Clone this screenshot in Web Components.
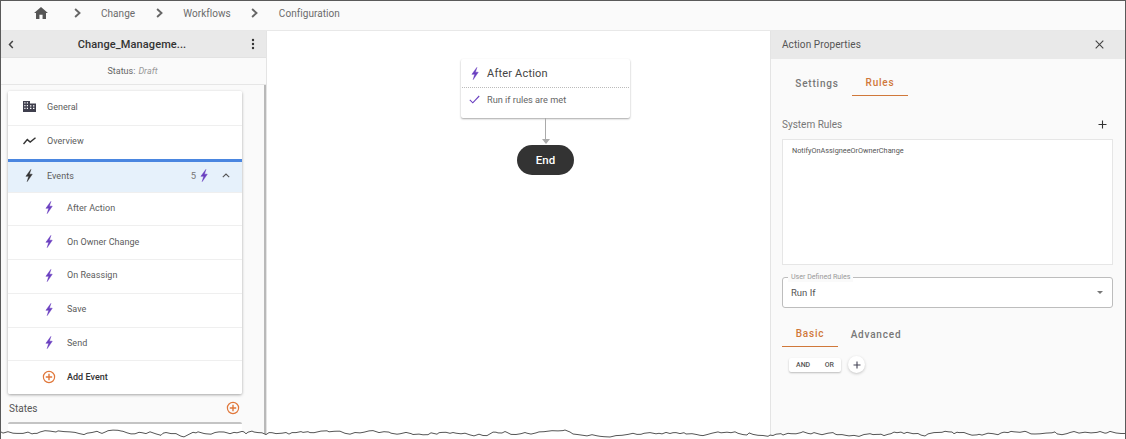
<!DOCTYPE html>
<html>
<head>
<meta charset="utf-8">
<title>Workflow configuration</title>
<style>
	html, body { margin: 0; height: 100%; background: #fff; overflow: hidden; }
	body { font-family: Roboto, "Liberation Sans", sans-serif; color: #4a4a4a; }
</style>
</head>
<body>
<wf-app></wf-app>
<script>
const BOLT = '<path d="M9.3 0.5 L3.2 9 L6.6 9 L4.8 15.5 L11 6.4 L7.5 6.4 Z"/>';
const PLUS_CIRCLE = `<svg width="14" height="14" viewBox="0 0 14 14" fill="none" stroke="#e0773a" stroke-width="1.2"><circle cx="7" cy="7" r="5.6"/><path d="M7 3.8v6.4M3.8 7h6.4" stroke-width="1.4"/></svg>`;

class WfIcon extends HTMLElement {
	constructor() {
		super();
		this.attachShadow({ mode: 'open' }).innerHTML = `
			<style>
				:host { display: inline-flex; width: 16px; height: 16px; align-items: center; justify-content: center; color: #6a3fc0; }
				:host([dark]) { color: #333; }
				svg { display: block; fill: currentColor; stroke: currentColor; stroke-width: .6; }
			</style>
			<svg width="12" height="13" viewBox="0 0 14 16">${BOLT}</svg>
		`;
	}
}
customElements.define('wf-bolt', WfIcon);

class WfBreadcrumb extends HTMLElement {
	constructor() {
		super();
		const chevron = '<svg width="7" height="10" viewBox="0 0 7 10" fill="none" stroke="#666" stroke-width="1.9"><path d="M1.1 1 L5.5 5 L1.1 9"/></svg>';
		this.attachShadow({ mode: 'open' }).innerHTML = `
			<style>
				:host { display: flex; align-items: center; height: 29px; flex: none; background: #fafafa; border-bottom: 1px solid #e8e8e8; font-size: 10px; letter-spacing: .05px; color: #6b6b6b; padding-left: 33px; }
				.wrap { display: flex; align-items: center; gap: 20.5px; height: 100%; padding-bottom: 5px; box-sizing: border-box; }
				svg { display: block; }
				.home { margin-right: 5px; }
				span { display: block; }
			</style>
			<div class="wrap">
				<svg class="home" width="14" height="12" viewBox="0 0 15 13" fill="#555"><path d="M7.5 0 L15 6.6 L12.9 6.6 L12.9 13 L9.2 13 L9.2 8.4 L5.8 8.4 L5.8 13 L2.1 13 L2.1 6.6 L0 6.6 Z"/></svg>
				${chevron}<span>Change</span>${chevron}<span>Workflows</span>${chevron}<span>Configuration</span>
			</div>
		`;
	}
}
customElements.define('wf-breadcrumb', WfBreadcrumb);

class WfNavRow extends HTMLElement {
	constructor() {
		super();
		this.attachShadow({ mode: 'open' }).innerHTML = `
			<style>
				:host { display: flex; align-items: center; height: 33.75px; box-sizing: border-box; background: #fff; border-top: 1px solid #efefef; font-size: 9px; letter-spacing: .03px; color: #5c5c5c; padding-bottom: 2px; }
				:host([first]) { border-top: 0; }
				:host([active]) { background: #e6f1fb; border-top: 3px solid #4a86e0; height: 33px; }
				.icon { width: 26px; margin-left: 8px; flex: none; display: flex; justify-content: center; }
				:host([sub]) .icon { margin-left: 33px; width: 16px; }
				:host([sub]) .label { margin-left: 10px; }
				:host([strong]) { color: #333; font-weight: 500; }
				.label { flex: 1; margin-left: 5px; }
			</style>
			<div class="icon"><slot name="icon"></slot></div>
			<div class="label"><slot></slot></div>
			<slot name="end"></slot>
		`;
	}
}
customElements.define('wf-nav-row', WfNavRow);

class WfSidebar extends HTMLElement {
	constructor() {
		super();
		this.attachShadow({ mode: 'open' }).innerHTML = `
			<style>
				:host { display: flex; flex-direction: column; width: 266px; flex: none; background: #fafafa; border-right: 1px solid #e4e4e4; box-sizing: border-box; overflow: hidden; }
				.head { display: flex; align-items: center; height: 26px; flex: none; background: #e9e9e9; border-bottom: 1px solid #e2e2e2; padding: 0 11px 0 7px; font-size: 11px; font-weight: 500; color: #333; letter-spacing: .1px; }
				.title { flex: 1; text-align: center; padding-right: 1px; }
				.status { height: 26px; flex: none; display: flex; align-items: center; justify-content: center; font-size: 9px; color: #666; border-bottom: 1px solid #e6e6e6; padding-right: 2px; }
				.status i { color: #999; margin-left: 3px; }
				.body { flex: 1; min-height: 0; border-right: 2.5px solid #b9b9b9; padding: 6px 22px 0 7px; }
				.card { background: #fff; box-shadow: 0 1px 3px rgba(0,0,0,.35); border-radius: 2px; overflow: hidden; }
				.states { display: flex; justify-content: space-between; align-items: center; height: 28px; font-size: 10px; color: #555; padding: 0 2px 0 1px; }
				.next { height: 20px; background: #fff; border-top: 2px solid #c4c4c4; border-radius: 2px; }
				.dots { display: block; }
			</style>
			<div class="head">
				<svg width="6" height="9" viewBox="0 0 6 9" fill="none" stroke="#444" stroke-width="1.5"><path d="M4.8 1 L1.5 4.5 L4.8 8"/></svg>
				<div class="title">Change_Manageme...</div>
				<svg class="dots" width="4" height="12" viewBox="0 0 4 12" fill="#333"><circle cx="2" cy="2" r="1.2"/><circle cx="2" cy="6" r="1.2"/><circle cx="2" cy="10" r="1.2"/></svg>
			</div>
			<div class="status">Status: <i>Draft</i></div>
			<div class="body">
				<div class="card">
					<wf-nav-row first>
						<svg slot="icon" width="13" height="11" viewBox="0 0 13 11" fill="#3f3f4d"><path d="M0 0h7v2.4h6V11H0z"/><path fill="#fff" d="M1.3 1.3h1.2v1.2H1.3zM3.8 1.3H5v1.2H3.8zM1.3 4h1.2v1.2H1.3zM3.8 4H5v1.2H3.8zM1.3 6.8h1.2V8H1.3zM3.8 6.8H5V8H3.8zM7 4.2h1.4v1.2H7zM10 4.2h1.4v1.2H10zM7 6.8h1.4V8H7zM10 6.8h1.4V8H10z"/></svg>
						General
					</wf-nav-row>
					<wf-nav-row>
						<svg slot="icon" width="13" height="8" viewBox="0 0 13 8" fill="none" stroke="#333" stroke-width="1.4"><path d="M0.5 7 L4.3 2.6 L7.2 5 L12.5 0.8"/></svg>
						Overview
					</wf-nav-row>
					<wf-nav-row active>
						<wf-bolt slot="icon" dark></wf-bolt>
						Events
						<span slot="end" style="display:flex;align-items:center;font-size:9.5px;color:#777;margin-right:10px">5 <wf-bolt></wf-bolt></span>
						<svg slot="end" width="8" height="5" viewBox="0 0 8 5" fill="none" stroke="#555" stroke-width="1.1" style="margin-right:12px"><path d="M0.8 4.2 L4 1 L7.2 4.2"/></svg>
					</wf-nav-row>
					<wf-nav-row sub><wf-bolt slot="icon"></wf-bolt>After Action</wf-nav-row>
					<wf-nav-row sub><wf-bolt slot="icon"></wf-bolt>On Owner Change</wf-nav-row>
					<wf-nav-row sub><wf-bolt slot="icon"></wf-bolt>On Reassign</wf-nav-row>
					<wf-nav-row sub><wf-bolt slot="icon"></wf-bolt>Save</wf-nav-row>
					<wf-nav-row sub><wf-bolt slot="icon"></wf-bolt>Send</wf-nav-row>
					<wf-nav-row sub strong><span slot="icon" style="display:block;height:14px">${PLUS_CIRCLE}</span>Add Event</wf-nav-row>
				</div>
				<div class="states">States ${PLUS_CIRCLE}</div>
				<div class="next"></div>
			</div>
		`;
	}
}
customElements.define('wf-sidebar', WfSidebar);

class WfCanvas extends HTMLElement {
	constructor() {
		super();
		this.attachShadow({ mode: 'open' }).innerHTML = `
			<style>
				:host { display: flex; align-items: flex-start; flex: 1; min-width: 0; background: #fff; padding: 28px 0 0 194px; box-sizing: border-box; }
				.flow { display: flex; flex-direction: column; align-items: center; width: 169px; }
				.node { width: 100%; box-sizing: border-box; background: #fff; border-radius: 2px; box-shadow: 0 1px 2px rgba(0,0,0,.35); }
				.top { display: flex; align-items: center; height: 28px; border-bottom: 1px dotted #bbb; padding-left: 5px; font-size: 11px; color: #444; letter-spacing: .2px; margin: 0 1px; }
				.top span { margin-left: 4px; }
				.rule { display: flex; align-items: center; height: 23px; padding: 0 0 7px 8px; font-size: 9.2px; color: #666; }
				.rule span { margin-left: 7px; }
				.line { width: 1px; height: 21px; background: #aaa; }
				.tip { width: 0; height: 0; border: 4px solid transparent; border-top: 5px solid #aaa; border-bottom: 0; margin-bottom: 1px; }
				.end { width: 57px; height: 30px; border-radius: 15px; background: #333; color: #fff; display: flex; align-items: center; justify-content: center; font-size: 11.5px; font-weight: 500; }
			</style>
			<div class="flow">
				<div class="node">
					<div class="top"><wf-bolt></wf-bolt><span>After Action</span></div>
					<div class="rule">
						<svg width="11" height="9" viewBox="0 0 11 9" fill="none" stroke="#6a3fc0" stroke-width="1.1"><path d="M0.8 4.8 L3.8 7.8 L10.2 1"/></svg>
						<span>Run if rules are met</span>
					</div>
				</div>
				<div class="line"></div>
				<div class="tip"></div>
				<div class="end">End</div>
			</div>
		`;
	}
}
customElements.define('wf-canvas', WfCanvas);

class WfTabs extends HTMLElement {
	constructor() {
		super();
		this.attachShadow({ mode: 'open' });
	}
	connectedCallback() {
		this.render();
	}
	render() {
		const selected = this.getAttribute('selected');
		this.shadowRoot.innerHTML = `
			<style>
				:host { display: flex; gap: var(--tab-gap, 7px); font-size: 10px; font-weight: 500; letter-spacing: .8px; color: #777; }
				div { width: 56px; height: 26px; display: flex; align-items: center; justify-content: center; box-sizing: border-box; }
				.on { color: #d0783a; border-bottom: 1.5px solid #d0783a; }
			</style>
			${(this.getAttribute('tabs') || '').split(',').map((tab) =>
				`<div class="${tab === selected ? 'on' : ''}">${tab}</div>`
			).join('')}
		`;
	}
}
customElements.define('wf-tabs', WfTabs);

class WfProperties extends HTMLElement {
	constructor() {
		super();
		this.attachShadow({ mode: 'open' }).innerHTML = `
			<style>
				:host { display: flex; flex-direction: column; width: 355px; flex: none; background: #fafafa; border-left: 1px solid #e4e4e4; box-sizing: border-box; overflow: hidden; }
				.head { display: flex; align-items: center; justify-content: space-between; height: 27px; flex: none; background: #e9e9e9; padding: 0 21px 1px 11px; font-size: 10px; color: #555; letter-spacing: .1px; }
				.pad { padding: 0 12px 0 11px; }
				wf-tabs.first { margin: 11px 0 0 7px; }
				.sys { display: flex; justify-content: space-between; align-items: center; height: 24px; margin: 16px 0 3px; font-size: 10px; color: #777; padding-right: 6px; }
				.box { height: 126px; background: #fff; border: 1px solid #e6e6e6; box-sizing: border-box; padding: 5px 9px; font-size: 7.3px; color: #555; line-height: 11px; }
				.select { position: relative; height: 31px; margin-top: 12px; background: #fff; border: 1px solid #bdbdbd; border-radius: 3px; box-sizing: border-box; display: flex; align-items: center; justify-content: space-between; padding: 0 9px 0 8px; font-size: 9.5px; color: #555; }
				.select label { position: absolute; left: 5px; top: -6px; background: #fafafa; padding: 0 3px; font-size: 7.1px; color: #999; line-height: 10px; }
				.caret { width: 0; height: 0; border: 3px solid transparent; border-top: 3px solid #777; border-bottom: 0; }
				wf-tabs.second { margin-top: 13px; --tab-gap: 10px; }
				.ops { display: flex; align-items: center; margin: 9px 0 0 7px; }
				.andor { display: flex; align-items: center; justify-content: space-between; width: 52px; height: 14px; box-sizing: border-box; padding: 0 7px; background: #fff; box-shadow: 0 1px 2px rgba(0,0,0,.25); border-radius: 2px; font-size: 7px; font-weight: 500; color: #555; }
				.add { width: 17px; height: 17px; border-radius: 50%; background: #fff; box-shadow: 0 1px 3px rgba(0,0,0,.22); margin-left: 7px; display: flex; align-items: center; justify-content: center; }
			</style>
			<div class="head">
				<span>Action Properties</span>
				<svg width="9" height="9" viewBox="0 0 9 9" stroke="#444" stroke-width="1.1"><path d="M0.7 0.7 L8.3 8.3 M8.3 0.7 L0.7 8.3"/></svg>
			</div>
			<div class="pad">
				<wf-tabs class="first" tabs="Settings,Rules" selected="Rules"></wf-tabs>
				<div class="sys">
					<span>System Rules</span>
					<svg width="9" height="9" viewBox="0 0 9 9" stroke="#333" stroke-width="1.1"><path d="M4.5 0.5v8M0.5 4.5h8"/></svg>
				</div>
				<div class="box">NotifyOnAssigneeOrOwnerChange</div>
				<div class="select">
					<label>User Defined Rules</label>
					<span>Run If</span>
					<div class="caret"></div>
				</div>
				<wf-tabs class="second" tabs="Basic,Advanced" selected="Basic"></wf-tabs>
				<div class="ops">
					<div class="andor"><span>AND</span><span>OR</span></div>
					<div class="add"><svg width="8" height="8" viewBox="0 0 8 8" stroke="#445" stroke-width="1.1"><path d="M4 0.5v7M0.5 4h7"/></svg></div>
				</div>
			</div>
		`;
	}
}
customElements.define('wf-properties', WfProperties);

class WfTornEdge extends HTMLElement {
	constructor() {
		super();
		// jagged cut-off line along the bottom of the capture, a seeded walk so it stays the same
		let seed = 17;
		const next = () => (seed = (seed * 16807) % 2147483647) / 2147483647;
		const points = [];
		let y = 6;
		for (let x = 0; x <= 1126; x += 2 + Math.round(next() * 4)) {
			y += (next() - .5) * 3.4 + (6.3 - y) * .3;
			y = Math.min(10, Math.max(1.5, y));
			points.push(`${x},${y.toFixed(1)}`);
		}
		points.push(`1126,${y.toFixed(1)}`);
		const line = points.join(' ');
		this.attachShadow({ mode: 'open' }).innerHTML = `
			<style>
				:host { display: block; position: absolute; left: -1px; right: -1px; bottom: 0; height: 12px; }
				svg { display: block; }
			</style>
			<svg width="1126" height="12" viewBox="0 0 1126 12">
				<polygon points="0,12 ${line} 1126,12" fill="#fff"/>
				<polyline points="${line}" fill="none" stroke="#2a2a2a" stroke-width=".8"/>
			</svg>
		`;
	}
}
customElements.define('wf-torn-edge', WfTornEdge);

class WfApp extends HTMLElement {
	constructor() {
		super();
		this.attachShadow({ mode: 'open' }).innerHTML = `
			<style>
				:host { display: flex; flex-direction: column; position: relative; width: 1126px; height: 439px; box-sizing: border-box; border: solid #5a5a5a; border-width: 1px 1px 0 1px; overflow: hidden; }
				.main { display: flex; flex: 1; min-height: 0; }
			</style>
			<wf-breadcrumb></wf-breadcrumb>
			<div class="main">
				<wf-sidebar></wf-sidebar>
				<wf-canvas></wf-canvas>
				<wf-properties></wf-properties>
			</div>
			<wf-torn-edge></wf-torn-edge>
		`;
	}
}
customElements.define('wf-app', WfApp);
</script>
</body>
</html>
